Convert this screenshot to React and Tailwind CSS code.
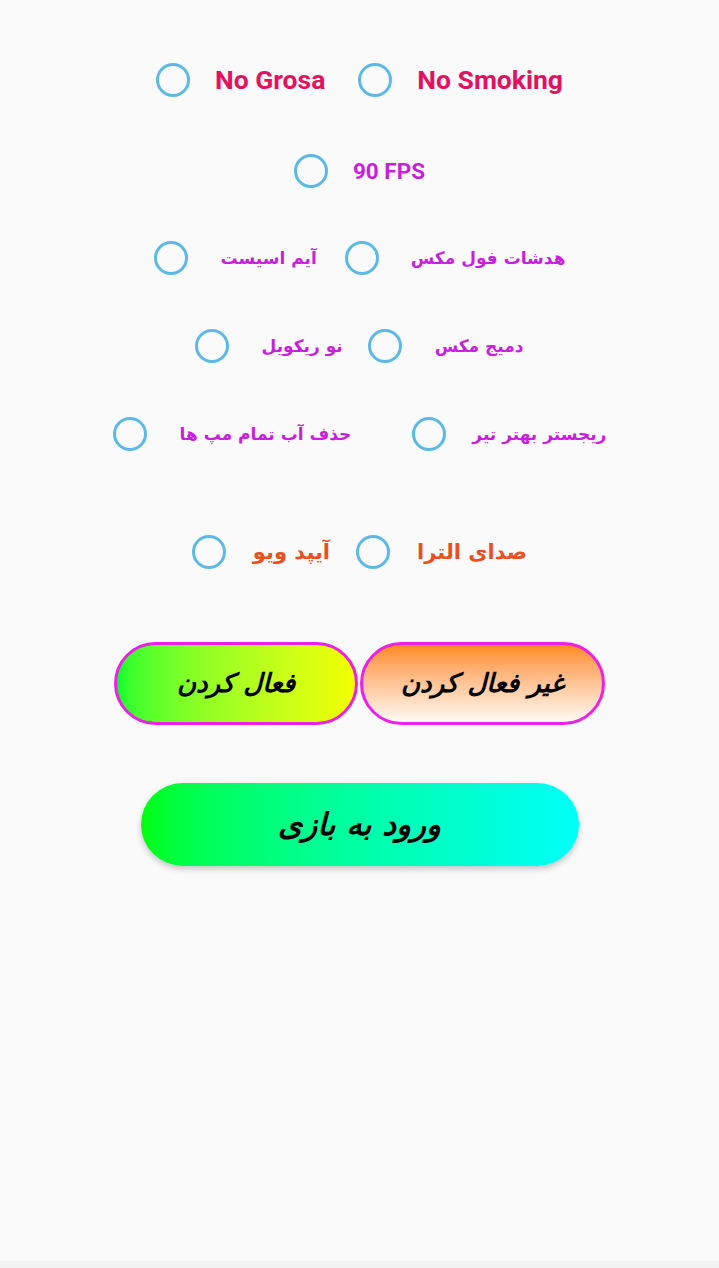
import { useState } from "react";

const FA = { fontFamily: '"DejaVu Sans", "Noto Sans", sans-serif' };
const EN = { fontFamily: 'Roboto, "Liberation Sans", sans-serif' };

function Radio({ label, color, size, gap, fa, checked, onClick }) {
  return (
    <button onClick={onClick} className={`flex items-center ${gap}`}>
      <span className="w-[34px] h-[34px] rounded-full border-[3px] border-[#5cb9e5] flex items-center justify-center shrink-0">
        {checked && <span className="w-[18px] h-[18px] rounded-full bg-[#5cb9e5]" />}
      </span>
      <span className={`font-bold ${size} ${color} leading-none whitespace-nowrap`} style={fa ? FA : EN} dir={fa ? "rtl" : "ltr"}>
        {label}
      </span>
    </button>
  );
}

export default function App() {
  const [on, setOn] = useState({});
  const tog = (k) => setOn(s => ({ ...s, [k]: !s[k] }));

  const pink = "text-[#e3115e]";
  const mag = "text-[#c81fde]";
  const org = "text-[#e8511c]";

  return (
    <div className="w-[719px] h-[1268px] bg-[#fafafa] flex flex-col items-center relative overflow-hidden">
      {/* row 1 */}
      <div className="h-[40px] mt-[60px] flex items-center justify-center gap-[33px]">
        <Radio label="No Grosa" color={pink} size="text-[26.5px]" gap="gap-[25px]" checked={on.a} onClick={() => tog("a")} />
        <Radio label="No Smoking" color={pink} size="text-[26.5px]" gap="gap-[25px]" checked={on.b} onClick={() => tog("b")} />
      </div>

      <div className="h-[40px] mt-[51px] flex items-center justify-center">
        <Radio label="90 FPS" color={mag} size="text-[22.5px]" gap="gap-[25px]" checked={on.c} onClick={() => tog("c")} />
      </div>

      <div className="h-[40px] mt-[47px] flex items-center justify-center gap-[28px]">
        <Radio fa label="آیم اسیست" color={mag} size="text-[17px]" gap="gap-[33px]" checked={on.d} onClick={() => tog("d")} />
        <Radio fa label="هدشات فول مکس" color={mag} size="text-[17px]" gap="gap-[32px]" checked={on.e} onClick={() => tog("e")} />
      </div>

      <div className="h-[40px] mt-[48px] flex items-center justify-center gap-[25px]">
        <Radio fa label="نو ریکویل" color={mag} size="text-[17px]" gap="gap-[32px]" checked={on.f} onClick={() => tog("f")} />
        <Radio fa label="دمیج مکس" color={mag} size="text-[17px]" gap="gap-[33px]" checked={on.g} onClick={() => tog("g")} />
      </div>

      <div className="h-[40px] mt-[48px] flex items-center justify-center gap-[61px]">
        <Radio fa label="حذف آب تمام مپ ها" color={mag} size="text-[17px]" gap="gap-[33px]" checked={on.h} onClick={() => tog("h")} />
        <Radio fa label="ریجستر بهتر تیر" color={mag} size="text-[17px]" gap="gap-[26px]" checked={on.i} onClick={() => tog("i")} />
      </div>

      <div className="h-[40px] mt-[78px] flex items-center justify-center gap-[26px]">
        <Radio fa label="آیپد ویو" color={org} size="text-[21px]" gap="gap-[27px]" checked={on.j} onClick={() => tog("j")} />
        <Radio fa label="صدای الترا" color={org} size="text-[21px]" gap="gap-[27px]" checked={on.k} onClick={() => tog("k")} />
      </div>

      {/* buttons */}
      <div className="mt-[70px] flex items-center gap-[2px]">
        <button className="w-[244px] h-[83px] rounded-full border-[3px] border-[#ee1fe6] bg-gradient-to-r from-[#00ff2e] to-[#f2ff00] flex items-center justify-center">
          <span className="text-[26px] font-bold italic text-black" style={FA} dir="rtl">فعال کردن</span>
        </button>
        <button className="w-[245px] h-[83px] rounded-full border-[3px] border-[#ee1fe6] bg-gradient-to-b from-[#ff8a12] to-[#fffaf4] flex items-center justify-center">
          <span className="text-[26px] font-bold italic text-black" style={FA} dir="rtl">غیر فعال کردن</span>
        </button>
      </div>

      <button className="mt-[58px] w-[438px] h-[83px] rounded-full bg-gradient-to-r from-[#00ff00] to-[#00fff8] shadow-[0_3px_6px_rgba(0,0,0,0.22)] flex items-center justify-center">
        <span className="text-[31px] font-bold italic text-black" style={FA} dir="rtl">ورود به بازی</span>
      </button>

      <div className="absolute left-0 bottom-0 w-full h-[7px] bg-[#f2f2f2]" />
    </div>
  );
}
